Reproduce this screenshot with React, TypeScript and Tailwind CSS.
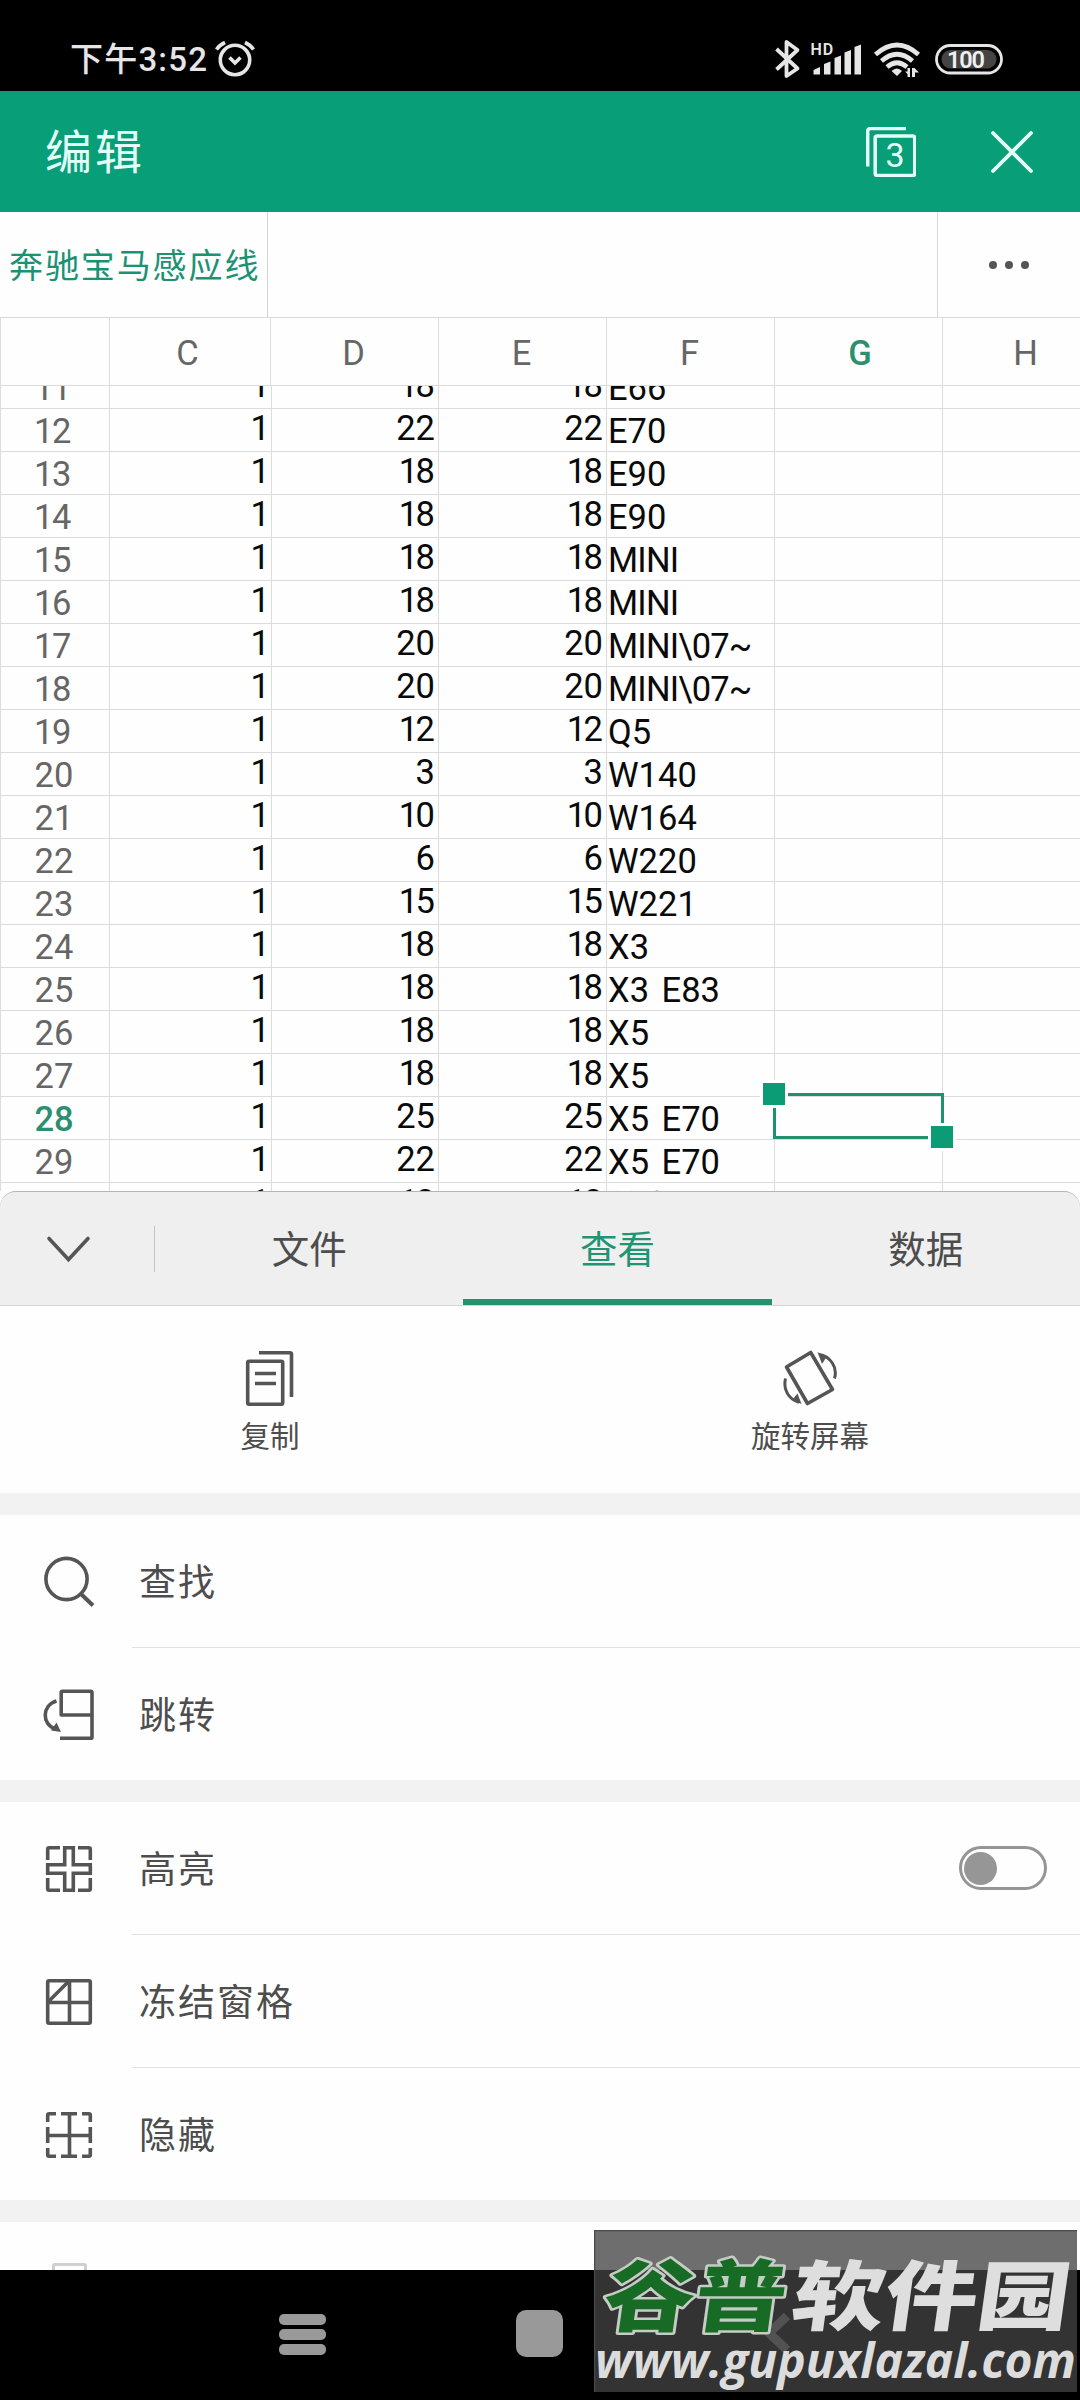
import type { ReactNode } from 'react';
import clsx from 'clsx';

//
// data

type SheetRow = [number, string, string, string, string];

const COLUMNS = ['C', 'D', 'E', 'F', 'G', 'H'];
const ACTIVE_COLUMN = 'G';
const ACTIVE_ROW = 28;

const ROWS: SheetRow[] = [
  [11, '1', '18', '18', 'E66'],
  [12, '1', '22', '22', 'E70'],
  [13, '1', '18', '18', 'E90'],
  [14, '1', '18', '18', 'E90'],
  [15, '1', '18', '18', 'MINI'],
  [16, '1', '18', '18', 'MINI'],
  [17, '1', '20', '20', 'MINI\\07~'],
  [18, '1', '20', '20', 'MINI\\07~'],
  [19, '1', '12', '12', 'Q5'],
  [20, '1', '3', '3', 'W140'],
  [21, '1', '10', '10', 'W164'],
  [22, '1', '6', '6', 'W220'],
  [23, '1', '15', '15', 'W221'],
  [24, '1', '18', '18', 'X3'],
  [25, '1', '18', '18', 'X3 E83'],
  [26, '1', '18', '18', 'X5'],
  [27, '1', '18', '18', 'X5'],
  [28, '1', '25', '25', 'X5 E70'],
  [29, '1', '22', '22', 'X5 E70'],
  [30, '1', '18', '18', '普卡'],
];

const TABS = ['文件', '查看', '数据'];
const ACTIVE_TAB = '查看';

//
// icons

interface IconProps {
  size?: number;
  children: ReactNode;
}

const Icon = ({ size = 52, children }: IconProps) => (
  <svg
    width={size}
    height={size}
    viewBox={`0 0 ${size} ${size}`}
    fill="none"
    stroke="#555"
    strokeWidth="3.6"
    strokeLinejoin="round"
    className="shrink-0"
  >
    {children}
  </svg>
);

const SearchIcon = () => (
  <Icon>
    <circle cx="23.5" cy="23" r="20.6" />
    <path d="M38 38L50 49.5" strokeWidth="4" />
  </Icon>
);

const GotoIcon = () => (
  <Icon>
    <path d="M17 49.3H48a1 1 0 0 0 1-1V3.200a1 1 0 0 0-1-1H19.200a1 1 0 0 0-1 1V26H49" />
    <path d="M13.500 12C-1.500 16.500-1 35.500 12 40" />
    <path d="M13.500 33.500L18 43L8 41.500Z" fill="#555" stroke="none" />
  </Icon>
);

const HighlightIcon = () => (
  <Icon>
    <path d="M4.700 17V6.200a1.500 1.500 0 0 1 1.500-1.500H17" />
    <path d="M35 4.700H45.800a1.500 1.500 0 0 1 1.500 1.500V17" />
    <path d="M4.700 35V45.800a1.500 1.500 0 0 0 1.500 1.500H17" />
    <path d="M35 47.300H45.800a1.500 1.500 0 0 0 1.500-1.500V35" />
    <path
      d="M21.700 4.700H30.300V21.700H47.300V30.300H30.300V47.300H21.700V30.300H4.700V21.700H21.700Z"
      strokeLinejoin="miter"
    />
  </Icon>
);

const FreezeIcon = () => (
  <Icon>
    <rect x="4.700" y="4.700" width="42.600" height="42.600" rx="1.500" />
    <path d="M26.500 4V48M4 26.500H48M5 26L26 5" />
  </Icon>
);

const HideIcon = () => (
  <Icon>
    <path d="M4.700 13V6.200a1.500 1.500 0 0 1 1.500-1.500H13M39 4.700H45.800a1.500 1.500 0 0 1 1.500 1.500V13" />
    <path d="M4.700 39V45.800a1.500 1.500 0 0 0 1.500 1.500H13M39 47.300H45.800a1.500 1.500 0 0 0 1.500-1.500V39" />
    <path d="M18 4.700H34M18 47.300H34M4.700 18V34M47.300 18V34M26.500 4.700V47.300M4.700 26.500H47.300" />
  </Icon>
);

const CopyIcon = () => (
  <Icon size={56}>
    <rect x="5.700" y="11.200" width="35" height="43" rx="1.500" />
    <path d="M17 2.700H48a1.500 1.500 0 0 1 1.500 1.500V47" />
    <path d="M13 23.500H34M13 33.500H34" />
  </Icon>
);

const RotateIcon = () => (
  <Icon size={56}>
    <path d="M28.700 2.500L4.500 17L25.500 53.500L50.500 39.500Z" />
    <path d="M37 4.500C48 6 56 17 52.500 28.500" strokeWidth="3" />
    <path d="M35.500 2L44.500 7L40 14Z" fill="#555" stroke="none" />
    <path d="M3.500 28.500C1 39 6 49 17 52.300" strokeWidth="3" />
    <path d="M19.500 54L10 50L15.500 43.500Z" fill="#555" stroke="none" />
  </Icon>
);

//
// sections

const StatusBar = () => (
  <div className="flex h-[91px] items-center bg-black pt-[27px] pl-[70px] text-[#e6e6e6]">
    <p className="pt-[2px] text-[33px] leading-[40px] font-medium tracking-[1.200px] whitespace-nowrap">下午3:52</p>

    <svg
      width="44"
      height="44"
      viewBox="0 0 44 44"
      fill="none"
      stroke="#e6e6e6"
      strokeWidth="3.600"
      className="ml-[5px]"
    >
      <circle cx="22" cy="23" r="14.700" />
      <path d="M16.500 20.500L22 26L27.500 20.500M3.500 12.500Q6.500 8 12 5.500M40.500 12.500Q37.500 8 32 5.500" />
    </svg>

    <svg width="240" height="44" viewBox="770 37 240 44" fill="none" className="mr-[70px] ml-auto">
      <path
        d="M776.500 49L797.500 68.500L786.500 76V42L797.500 50L776.500 69.500"
        stroke="#e6e6e6"
        strokeWidth="3.800"
        strokeLinejoin="round"
      />
      <text x="810.500" y="55" fontSize="16" fontWeight="600" fill="#e6e6e6" letterSpacing="0.800">
        HD
      </text>
      <g fill="#e6e6e6">
        <path d="M813.500 74.500V70L820 67V74.500Z" />
        <path d="M824 74.500V64L830.500 61.500V74.500Z" />
        <path d="M834.500 74.500V58L841 55.500V74.500Z" />
        <path d="M844.500 74.500V52.500L851 50V74.500Z" />
        <path d="M854.500 74.500V47L861 44.500V74.500Z" />
        <path d="M891.500 71Q897 66 902 71L897 76Z" />
        <path d="M910 68V77H907.500V74L905 71.500H907.500V68ZM912 68H914.500L919 72.500H915V77H912Z" />
      </g>
      <g stroke="#e6e6e6" strokeWidth="4.600">
        <path d="M875.500 54.500Q897 35.500 918.500 54.500" />
        <path d="M881.500 61Q897 47.500 912.500 61" />
        <path d="M887 67Q897 58.500 907 67" />
      </g>
      <rect x="936.500" y="45.500" width="65" height="27.500" rx="13.700" stroke="#e6e6e6" strokeWidth="2.800" />
      <rect x="941.500" y="50" width="55" height="18.500" rx="9.200" fill="#444" />
      <text x="947" y="68" fontSize="23.500" fontWeight="600" fill="#f0f0f0" textLength="38">
        100
      </text>
    </svg>
  </div>
);

const TitleBar = () => (
  <div className="flex h-[121px] items-center bg-[#089e77] pr-[46px] pl-[45px] text-[#e4fff8]">
    <h1 className="pt-[3px] text-[47px] leading-[56px] tracking-[3px]">编辑</h1>

    <div className="relative ml-auto h-[50px] w-[50px]">
      <svg width="50" height="50" viewBox="0 0 50 50" fill="none" stroke="currentColor" strokeWidth="3.500">
        <path d="M1.700 39.500V4a2.500 2.500 0 0 1 2.500-2.500H40" />
        <rect x="9.200" y="9" width="39.500" height="39.500" rx="2" />
      </svg>
      <span className="absolute top-[8px] left-[9px] w-[40px] text-center text-[34px] leading-[40px]">3</span>
    </div>

    <svg
      width="44"
      height="44"
      viewBox="0 0 44 44"
      stroke="currentColor"
      strokeWidth="3.800"
      strokeLinecap="round"
      className="ml-[74px]"
    >
      <path d="M3 3L41 41M41 3L3 41" />
    </svg>
  </div>
);

const SheetTabs = () => (
  <div className="flex h-[106px] border-b border-[#dadada] bg-[#fefefe]">
    <div className="flex w-[268px] items-center border-r border-[#d4d4d4] pl-[9px]">
      <p className="pt-[2px] text-[34px] leading-[40px] tracking-[1.900px] whitespace-nowrap text-[#1b9373]">
        奔驰宝马感应线
      </p>
    </div>

    <div className="flex-1 border-r border-[#d8d8d8]" />

    <div className="flex w-[142px] items-center justify-center gap-2">
      <span className="h-2 w-2 rounded-full bg-[#555]" />
      <span className="h-2 w-2 rounded-full bg-[#555]" />
      <span className="h-2 w-2 rounded-full bg-[#555]" />
    </div>
  </div>
);

const GRID = 'grid grid-cols-[110px_161px_168px_168px_168px_168px_168px]';
const CELL = 'border-r border-b border-[#dcdcdc]';

const CellSelection = () => (
  <div className="absolute -top-[3px] -left-[2px] z-10 h-[46px] w-[171px] border-[3px] border-[#22906f]">
    <span className="absolute -top-[16px] -left-[16px] h-[28px] w-[28px] border-[3px] border-white bg-[#0b9b75]" />
    <span className="absolute -right-[15px] -bottom-[15px] h-[28px] w-[28px] border-[3px] border-white bg-[#0b9b75]" />
  </div>
);

// a leading 1 is set tighter than the other digits
const tighten = (value: string) => value.length > 1 && value.startsWith('1');

const NumberCell = ({ value }: { value: string }) => (
  <div className={clsx(CELL, 'flex justify-end', value === '1' ? '-mr-px pr-px' : 'pr-[3px]')}>
    {tighten(value) ? (
      <p>
        <span className="tracking-[-2.500px]">1</span>
        {value.slice(1)}
      </p>
    ) : (
      value
    )}
  </div>
);

const SheetRowView = ({ row }: { row: SheetRow }) => {
  const [index, c, d, e, f] = row;
  const isActive = index === ACTIVE_ROW;

  return (
    <div className={clsx(GRID, 'h-[43px] text-[34.500px] leading-[40px] text-[#0a0a0a]')}>
      <div
        className={clsx(
          CELL,
          'border-l pt-[3px] text-center',
          isActive ? 'font-medium text-[#2b8f70]' : 'text-[#666]',
          index < 20 ? 'pr-[6px] tracking-[-1.500px]' : 'pr-[2px]',
        )}
      >
        {index}
      </div>
      <NumberCell value={c} />
      <NumberCell value={d} />
      <NumberCell value={e} />
      <div
        className={clsx(
          CELL,
          'pl-px whitespace-nowrap [word-spacing:4px]',
          index === 30 ? 'pt-[6px] pl-[4px] text-[33px]' : 'pt-[3px]',
          f.startsWith('MINI') && 'tracking-[-0.800px]',
        )}
      >
        {f}
      </div>
      <div className={clsx(CELL, 'relative')}>{isActive && <CellSelection />}</div>
      <div className={CELL} />
    </div>
  );
};

const Sheet = () => (
  <div className="h-[873px] overflow-hidden bg-[#fefefe]">
    <div className={clsx(GRID, 'relative z-10 h-[68px] bg-[#fefefe] text-[34.500px] text-[#666]')}>
      <div className={clsx(CELL, 'border-l')} />
      {COLUMNS.map((name) => (
        <div
          key={name}
          className={clsx(
            CELL,
            'flex items-center justify-center pt-[4px]',
            name === 'C' && 'pr-[5px]',
            name === ACTIVE_COLUMN ? 'pl-[3px] font-medium text-[#2b8f70]' : 'pr-[2px]',
          )}
        >
          {name}
        </div>
      ))}
    </div>

    <div className="h-[805px] overflow-hidden">
      <div className="-mt-[21px]">
        {ROWS.map((row) => (
          <SheetRowView key={row[0]} row={row} />
        ))}
      </div>
    </div>
  </div>
);

const PanelTabs = () => (
  <div className="bg-white">
    <div className="flex h-[115px] rounded-t-[16px] border-t border-b border-t-[#b5b5b5] border-b-[#d5d5d5] bg-[#efefef]">
      <div className="flex w-[154px] items-center pl-[45px]">
        <svg
          width="48"
          height="30"
          viewBox="0 0 48 30"
          fill="none"
          stroke="#555"
          strokeWidth="3.600"
          strokeLinecap="round"
        >
          <path d="M4 4.500L23.500 25.500L43 4.500" />
        </svg>
      </div>
      <div className="h-[46px] w-px self-center bg-[#c4c4c4]" />

      <div className="grid flex-1 grid-cols-3">
        {TABS.map((tab) => (
          <div
            key={tab}
            className={clsx(
              'flex items-center justify-center border-b-[6px] pt-[10px] text-[37.500px]',
              tab === ACTIVE_TAB ? 'border-[#25926f] text-[#1f9573]' : 'border-transparent text-[#4d4d4d]',
            )}
          >
            {tab}
          </div>
        ))}
      </div>
    </div>
  </div>
);

const QuickAction = ({ icon, label }: { icon: ReactNode; label: string }) => (
  <div className="flex flex-col items-center pt-[44px] text-[#4d4d4d]">
    {icon}
    <p className="mt-[9px] text-[29.500px] leading-[44px]">{label}</p>
  </div>
);

interface MenuItemProps {
  icon: ReactNode;
  label: string;
  divider?: boolean;
  children?: ReactNode;
}

const MenuItem = ({ icon, label, divider, children }: MenuItemProps) => (
  <div className="flex h-[133px] pl-[43px]">
    <div className="flex w-[89px] items-center">{icon}</div>
    <div className={clsx('flex flex-1 items-center pr-[33px] pl-[7px]', divider && 'border-b border-[#e2e2e2]')}>
      <p className="pt-[5px] text-[37px] tracking-[2px] text-[#4d4d4d]">{label}</p>
      {children}
    </div>
  </div>
);

const Toggle = () => (
  <div className="ml-auto flex h-[44px] w-[88px] items-center rounded-full border-[3px] border-[#959595] pl-[2px]">
    <span className="h-[33px] w-[33px] rounded-full bg-[#969696]" />
  </div>
);

const Gap = () => <div className="h-[22px] bg-[#f2f2f2]" />;

const NavigationBar = () => (
  <div className="relative flex h-[130px] bg-black">
    <div className="mt-[44px] ml-[279px] flex w-[47px] flex-col gap-[4px]">
      <span className="h-[11px] rounded-[5px] bg-[#999]" />
      <span className="h-[11px] rounded-[5px] bg-[#999]" />
      <span className="h-[11px] rounded-[5px] bg-[#999]" />
    </div>
    <div className="mt-[40px] ml-[190px] h-[47px] w-[47px] rounded-[10px] bg-[#999]" />
    <svg width="30" height="44" viewBox="0 0 30 44" className="mt-[41px] ml-[198px]">
      <path d="M26 5L8 22L26 39" fill="none" stroke="#888" strokeWidth="9" />
    </svg>

    <svg width="483" height="162" viewBox="0 0 483 162" className="absolute right-[3px] bottom-[8px]">
      <rect width="483" height="162" fill="#424242" fillOpacity="0.770" />
      <path d="M0.500 162V0.500H483" fill="none" stroke="#4a4a4a" strokeWidth="1.500" />
      <g fontFamily="'Noto Sans CJK SC', sans-serif" fontWeight="900" transform="skewX(-8)">
        <text
          x="20"
          y="95"
          fontSize="78"
          textLength="182"
          lengthAdjust="spacingAndGlyphs"
          fill="#176b24"
          stroke="#c4ccc5"
          strokeWidth="5"
          strokeLinejoin="round"
          paintOrder="stroke"
        >
          谷普
        </text>
        <text x="208" y="94" fontSize="76" textLength="278" lengthAdjust="spacingAndGlyphs" fill="#dedede">
          软件园
        </text>
      </g>
      <text
        x="1"
        y="148"
        fontFamily="'Open Sans', sans-serif"
        fontStyle="italic"
        fontWeight="700"
        fontSize="48"
        textLength="481"
        lengthAdjust="spacingAndGlyphs"
        fill="#dcdcdc"
      >
        www.gupuxlazal.com
      </text>
    </svg>
  </div>
);

export default function App() {
  return (
    <div className="h-[2400px] w-[1080px] overflow-hidden bg-[#fefefe] font-[Roboto,'Noto_Sans_CJK_SC',sans-serif]">
      <StatusBar />
      <TitleBar />
      <SheetTabs />
      <Sheet />
      <PanelTabs />

      <div className="grid h-[187px] grid-cols-2">
        <QuickAction icon={<CopyIcon />} label="复制" />
        <QuickAction icon={<RotateIcon />} label="旋转屏幕" />
      </div>

      <Gap />
      <MenuItem icon={<SearchIcon />} label="查找" divider />
      <div className="-mb-px">
        <MenuItem icon={<GotoIcon />} label="跳转" />
      </div>

      <Gap />
      <MenuItem icon={<HighlightIcon />} label="高亮" divider>
        <Toggle />
      </MenuItem>
      <MenuItem icon={<FreezeIcon />} label="冻结窗格" divider />
      <div className="-mb-px">
        <MenuItem icon={<HideIcon />} label="隐藏" />
      </div>

      <Gap />
      <div className="h-[48px] overflow-hidden pt-[41px] pl-[52px]">
        <div className="h-[40px] w-[35px] rounded-[3px] border-[3px] border-[#cfcfcf]" />
      </div>

      <NavigationBar />
    </div>
  );
}
